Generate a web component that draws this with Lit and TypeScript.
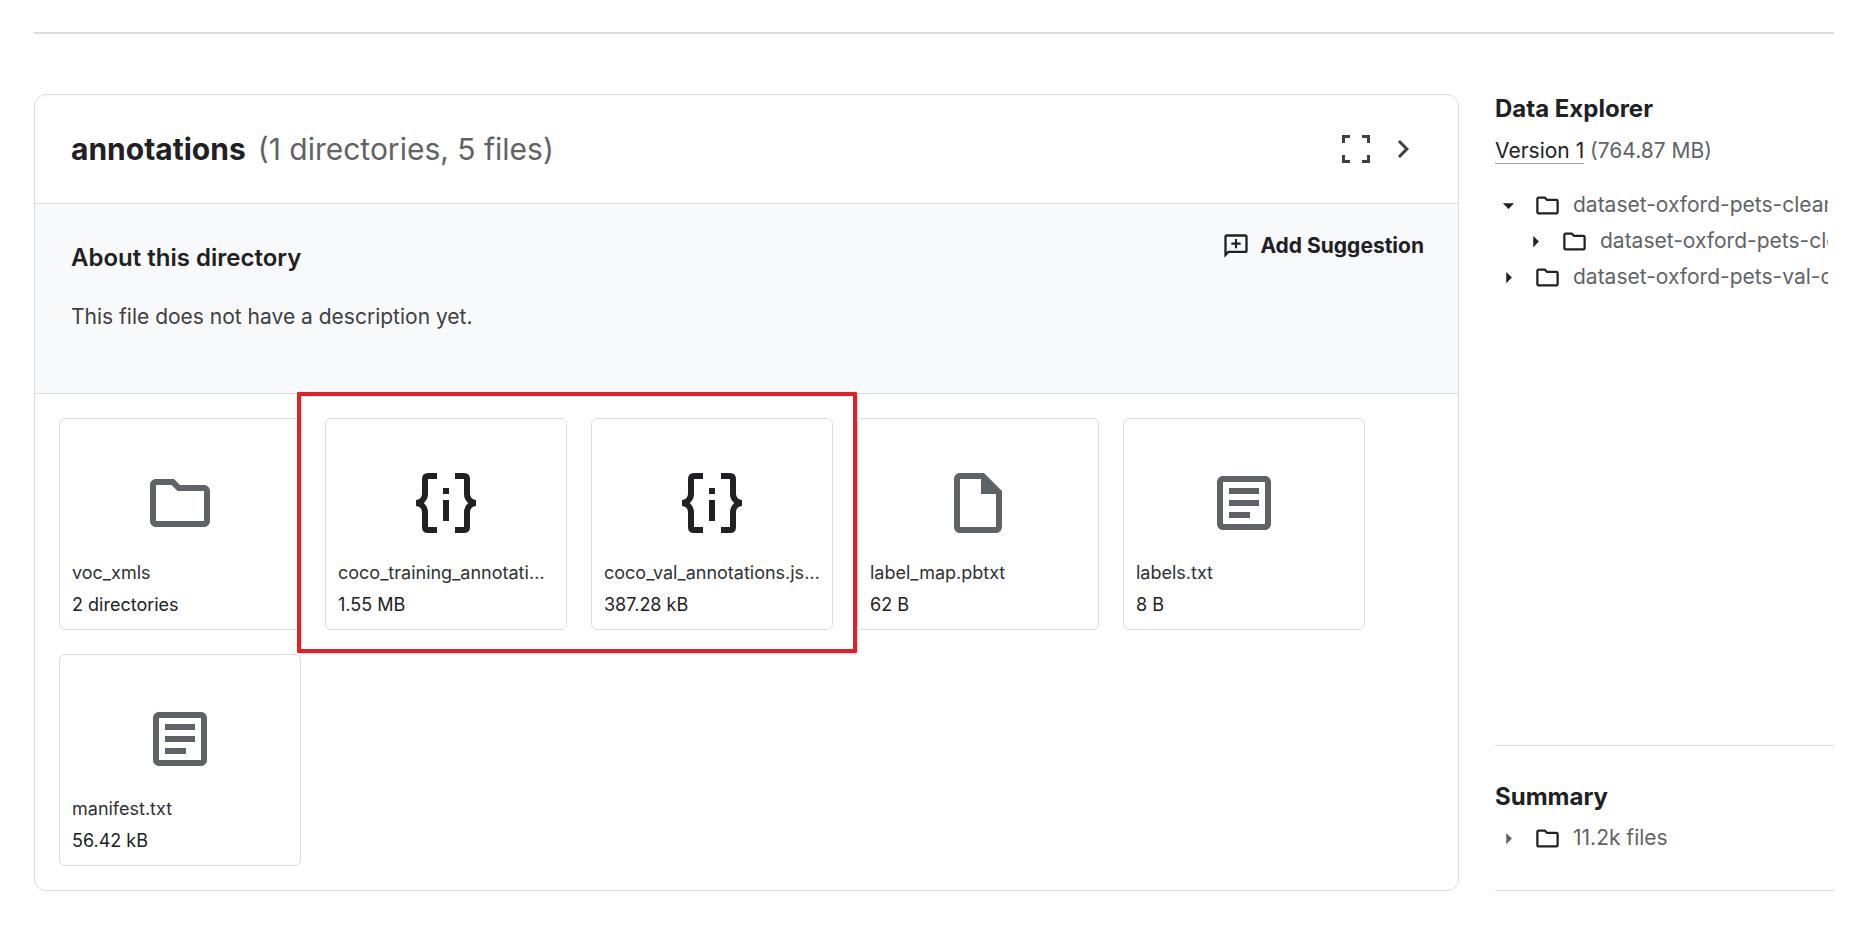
import { LitElement, html, css, svg } from "lit";
import { customElement, property } from "lit/decorators.js";

const icons = {
  folder: svg`<path d="M9.17 6l2 2H20v10H4V6h5.17M10 4H4c-1.1 0-2 .9-2 2v12c0 1.1.9 2 2 2h16c1.1 0 2-.9 2-2V8c0-1.1-.9-2-2-2h-8l-2-2z"/>`,
  json: svg`<path d="M9 2H6Q4 2 4 4v5a2 2 0 0 1-2 2v2a2 2 0 0 1 2 2v5q0 2 2 2h3v-2H6v-5a4 4 0 0 0-1.4-3A4 4 0 0 0 6 9V4h3zM15 2h3q2 0 2 2v5a2 2 0 0 0 2 2v2a2 2 0 0 0-2 2v5q0 2-2 2h-3v-2h3v-5a4 4 0 0 1 1.4-3A4 4 0 0 1 18 9V4h-3zM11 7h2v2h-2zM11 11h2v7h-2z"/>`,
  file: svg`<path fill-rule="evenodd" d="M14 2H6c-1.1 0-2 .9-2 2v16c0 1.1.9 2 2 2h12c1.1 0 2-.9 2-2V8l-6-6zM6 20V4h7v5h5v11H6z"/>`,
  article: svg`<path fill-rule="evenodd" d="M5 3h14c1.1 0 2 .9 2 2v14c0 1.1-.9 2-2 2H5c-1.1 0-2-.9-2-2V5c0-1.1.9-2 2-2zm0 2v14h14V5H5zm2 2h10v2H7zm0 4h10v2H7zm0 4h7v2H7z"/>`,
  fullscreen: svg`<path d="M5 13V5h8v3H8v5zM25 5h8v8h-3V8h-5zM5 25h3v5h5v3H5zM30 25h3v8h-8v-3h5z"/>`,
  chevron: svg`<path d="M8.6 16.6l4.6-4.6-4.6-4.6L10 6l6 6-6 6z"/>`,
  suggest: svg`<path fill-rule="evenodd" d="M4 2h16c1.1 0 2 .9 2 2v12c0 1.1-.9 2-2 2H6l-4 4V4c0-1.1.9-2 2-2zm0 2v13.2L5.2 16H20V4H4zm7.1 2h1.8v3.1H16v1.8h-3.100v3.100h-1.800v-3.100H8V9.100h3.100z"/>`,
  right: svg`<path d="M10 17l5-5-5-5z"/>`,
  down: svg`<path d="M7 10l5 5 5-5z"/>`,
};
type IconName = keyof typeof icons;

@customElement("ui-icon")
class UiIcon extends LitElement {
  @property() name: IconName = "folder";
  static styles = css`
    :host { display: block; flex: none; }
    svg { display: block; width: 100%; height: 100%; fill: currentColor; }
  `;
  render() {
    const box = this.name === "fullscreen" ? "0 0 38 38" : "0 0 24 24";
    return html`<svg viewBox=${box} aria-hidden="true">${icons[this.name]}</svg>`;
  }
}

@customElement("file-card")
class FileCard extends LitElement {
  @property() name = "";
  @property() size = "";
  @property() icon: IconName = "file";
  static styles = css`
    :host { display: block; min-width: 0; }
    .card {
      box-sizing: border-box; width: 100%; padding: 48px 12px 12px;
      display: flex; flex-direction: column; align-items: stretch; gap: 8px;
      border: 1px solid #dadce0; border-radius: 6px; background: #fff;
      font: 400 18px/24px Inter, sans-serif; color: #202124; text-align: left; cursor: pointer;
    }
    .glyph { width: 72px; height: 72px; align-self: center; margin-bottom: 14px; color: #5f6368; }
    .glyph.json { color: #202124; }
    .name { color: #303134; overflow: hidden; white-space: nowrap; text-overflow: ellipsis; }
  `;
  render() {
    return html`<button class="card">
      <ui-icon class="glyph ${this.icon}" .name=${this.icon}></ui-icon>
      <span class="name">${this.name}</span>
      <span>${this.size}</span>
    </button>`;
  }
}

@customElement("tree-row")
class TreeRow extends LitElement {
  @property() label = "";
  @property({ type: Boolean }) open = false;
  static styles = css`
    :host { display: block; overflow: hidden; }
    .row {
      display: flex; align-items: center; height: 36px; padding: 0; border: 0; background: none;
      font: inherit; color: inherit; white-space: nowrap; cursor: pointer;
    }
    .arrow { width: 27px; height: 27px; color: var(--arrow, #202124); }
    .folder { width: 27px; height: 27px; margin: 0 12px 0 12px; color: #202124; }
  `;
  render() {
    return html`<button class="row" aria-expanded=${this.open ? "true" : "false"}>
      <ui-icon class="arrow" .name=${this.open ? "down" : "right"}></ui-icon>
      <ui-icon class="folder" .name=${"folder"}></ui-icon>
      <span>${this.label}</span>
    </button>`;
  }
}

const files: { name: string; size: string; icon: IconName }[] = [
  { name: "voc_xmls", size: "2 directories", icon: "folder" },
  { name: "coco_training_annotations.json", size: "1.55 MB", icon: "json" },
  { name: "coco_val_annotations.json", size: "387.28 kB", icon: "json" },
  { name: "label_map.pbtxt", size: "62 B", icon: "file" },
  { name: "labels.txt", size: "8 B", icon: "article" },
  { name: "manifest.txt", size: "56.42 kB", icon: "article" },
];

@customElement("app-root")
class AppRoot extends LitElement {
  static styles = css`
    :host {
      display: block; min-height: 100vh; box-sizing: border-box; padding: 32px 40px 44px 34px;
      background: #fff; color: #202124; font: 400 21px/30px Inter, sans-serif;
    }
    h1, h2, h3, p { margin: 0; }
    .rule { height: 2px; margin: 0 0 60px; border: 0; background: #dadce0; }
    .layout { display: grid; grid-template-columns: minmax(0, 1fr) 339px; gap: 36px; }
    .panel { border: 1px solid #dadce0; border-radius: 12px; }
    .head {
      display: flex; align-items: center; gap: 12px; height: 108px; padding: 0 37px 0 36px;
      border-bottom: 1px solid #dadce0;
    }
    .title { font-size: 30px; line-height: 36px; font-weight: 700; }
    .count { font-size: 30px; line-height: 36px; color: #5f6368; margin-right: auto; }
    .tools { display: flex; align-items: center; gap: 10px; }
    .tool { display: block; padding: 0; border: 0; background: none; color: #3c4043; cursor: pointer; }
    .tool ui-icon { width: 38px; height: 38px; }
    .tool .chevron { width: 36px; height: 36px; }
    .about {
      display: grid; grid-template-columns: 1fr auto; align-items: start;
      padding: 24px 34px 61px 36px;
      background: #f8f9fb; border-bottom: 1px solid #dadce0;
    }
    .about-title { font-size: 24px; line-height: 30px; font-weight: 600; margin: 15px 0 29px; }
    .about-text { color: #3c4043; }
    .suggest {
      display: flex; align-items: center; gap: 10px; padding: 0; border: 0; background: none;
      height: 36px; color: #202124; font: 700 21px/30px Inter, sans-serif; cursor: pointer;
    }
    .suggest ui-icon { width: 28px; height: 28px; }
    .files {
      position: relative; display: grid; grid-template-columns: repeat(auto-fill, 242px);
      gap: 24px; padding: 24px;
    }
    .marker {
      position: absolute; left: 262px; top: -2px; width: 560px; height: 261px;
      box-sizing: border-box; border: 4px solid #ed1c24; border-radius: 1px; pointer-events: none;
    }
    .side { display: flex; flex-direction: column; min-width: 0; color: #5f6368; }
    .side-title { font-size: 24px; line-height: 30px; font-weight: 700; color: #202124; }
    .version { margin: 12px 0 21px; }
    .version a { color: #202124; text-decoration: none; display: inline-block; line-height: 24px; border-bottom: 1px solid #9aa0a6; }
    .tree { flex: 1; padding-right: 6px; }
    .tree .child { padding-left: 27px; }
    .summary {
      border: solid #dadce0; border-width: 1px 0; padding: 36px 0 34px; font-weight: 400;
      --arrow: #5f6368;
    }
    .summary .side-title { margin-bottom: 8px; }
  `;
  render() {
    return html`
      <hr class="rule" />
      <div class="layout">
        <main class="panel">
          <header class="head">
            <h1 class="title">annotations</h1>
            <span class="count">(1 directories, 5 files)</span>
            <div class="tools">
              <button class="tool" aria-label="Fullscreen"><ui-icon .name=${"fullscreen"}></ui-icon></button>
              <button class="tool" aria-label="Collapse"><ui-icon class="chevron" .name=${"chevron"}></ui-icon></button>
            </div>
          </header>
          <section class="about">
            <div>
              <h2 class="about-title">About this directory</h2>
              <p class="about-text">This file does not have a description yet.</p>
            </div>
            <button class="suggest"><ui-icon .name=${"suggest"}></ui-icon>Add Suggestion</button>
          </section>
          <section class="files">
            ${files.map((f) => html`<file-card .name=${f.name} .size=${f.size} .icon=${f.icon}></file-card>`)}
            <div class="marker"></div>
          </section>
        </main>
        <aside class="side">
          <h2 class="side-title">Data Explorer</h2>
          <p class="version"><a href="#">Version 1</a> (764.87 MB)</p>
          <div class="tree">
            <tree-row .label=${"dataset-oxford-pets-clean"} .open=${true}></tree-row>
            <tree-row class="child" .label=${"dataset-oxford-pets-clean"}></tree-row>
            <tree-row .label=${"dataset-oxford-pets-val-only"}></tree-row>
          </div>
          <section class="summary">
            <h2 class="side-title">Summary</h2>
            <tree-row .label=${"11.2k files"}></tree-row>
          </section>
        </aside>
      </div>
    `;
  }
}
